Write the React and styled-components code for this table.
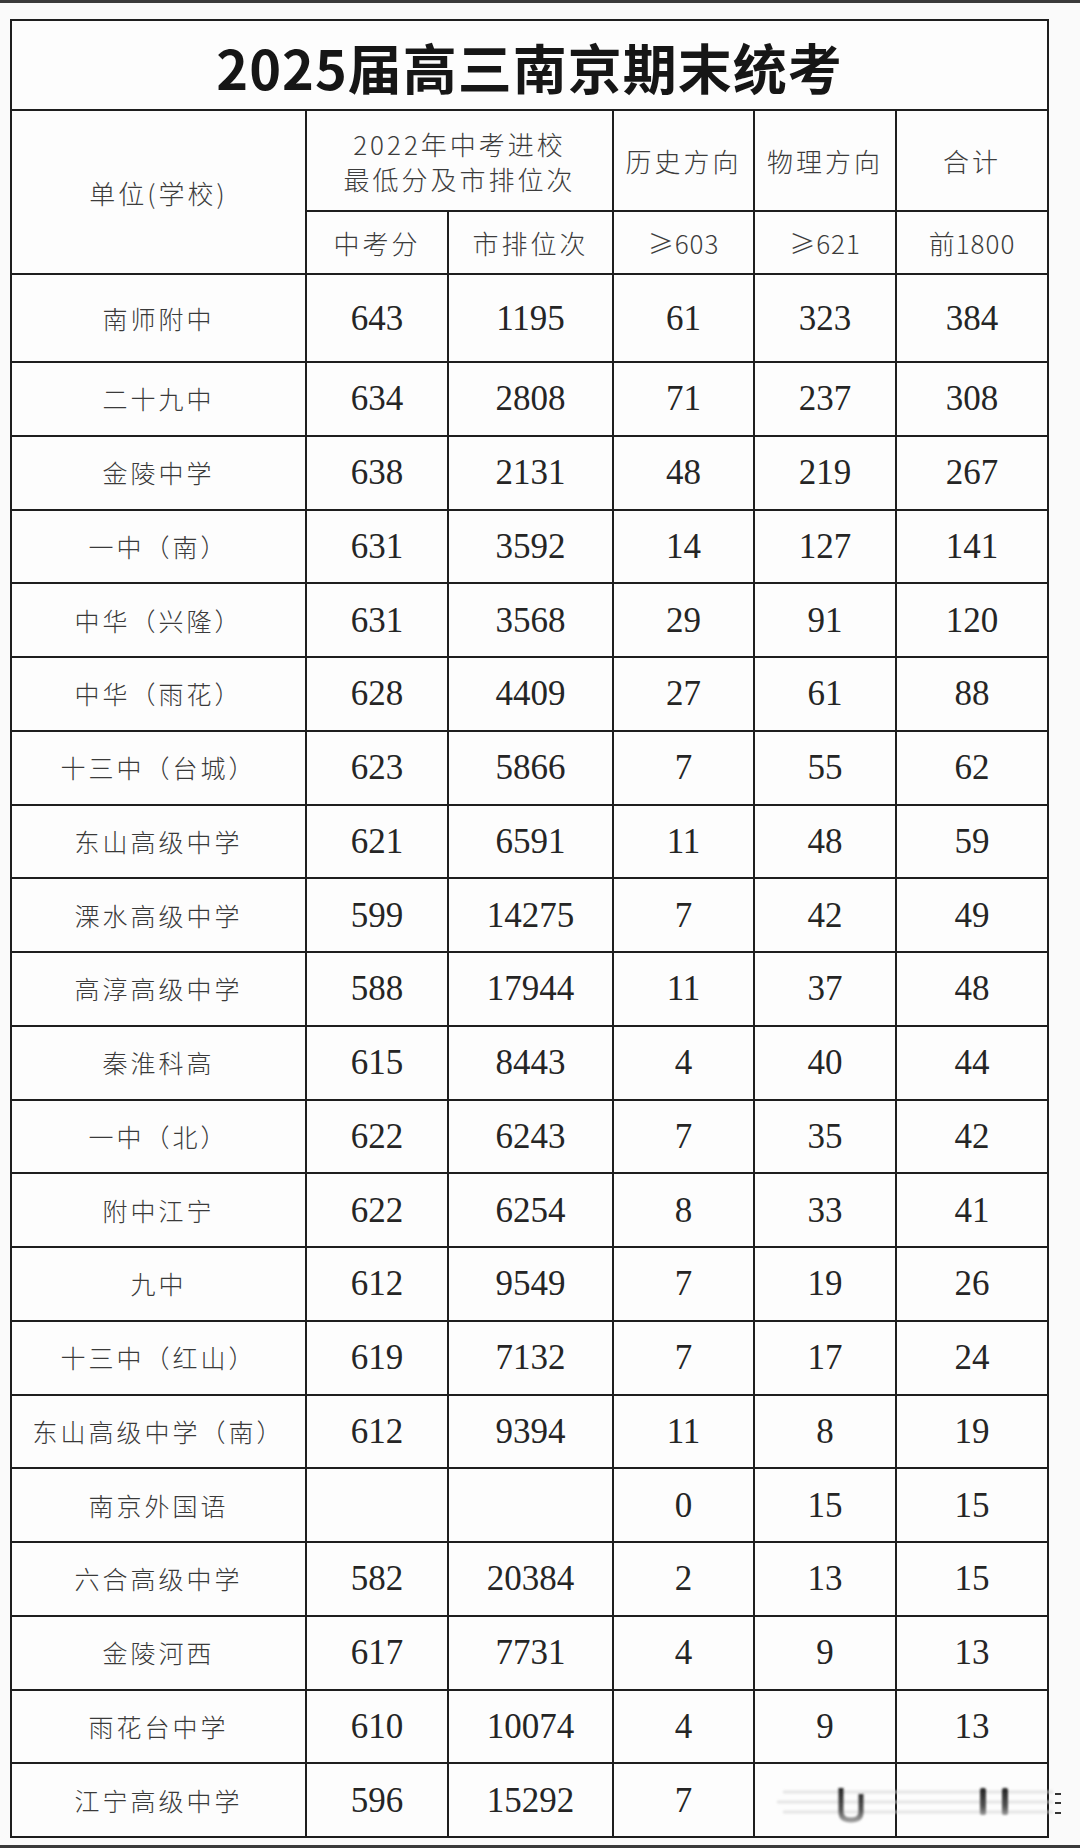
import React from 'react';
import styled, { createGlobalStyle } from 'styled-components';

const GlobalStyle = createGlobalStyle`
  html, body {
    margin: 0;
    padding: 0;
    background: #f9f9f9;
  }
  body {
    font-family: "Noto Sans CJK SC", "Noto Sans", sans-serif;
  }
`;

const Page = styled.div`
  width: 1080px;
  height: 1848px;
  box-sizing: border-box;
  border-top: 3px solid #3a3a3a;
  border-bottom: 3px solid #3a3a3a;
  padding: 16px 0 0 10px;
  background: #fafafa;
  overflow: hidden;
`;

const Frame = styled.div`
  position: relative;
  width: 1037px;
`;

const Table = styled.table`
  width: 1037px;
  table-layout: fixed;
  border-collapse: collapse;
  border: 2px solid #1e1e1e;
  background: #fdfdfd;
`;

const Cell = styled.td`
  border: 2px solid #1e1e1e;
  padding: 0;
  text-align: center;
  vertical-align: middle;
  color: #444;
`;

const TitleCell = styled(Cell)`
  height: 84px;
  padding-top: 4px;
  font-size: 54px;
  font-weight: 700;
  color: #161616;
  letter-spacing: 1px;
  line-height: 1;
`;

const HeadCell = styled(Cell)`
  height: ${p => p.$h}px;
  font-size: 26px;
  font-weight: 300;
  letter-spacing: ${p => (p.$tight ? 1 : 3)}px;
  line-height: 35px;
  color: #3c3c3c;
`;

const NameCell = styled(Cell)`
  height: ${p => p.$h}px;
  font-size: 25px;
  font-weight: 300;
  letter-spacing: 3px;
  color: #3a3a3a;
  line-height: 1;
`;

const NumCell = styled(Cell)`
  font-family: "Liberation Serif", "DejaVu Serif", serif;
  font-size: 35px;
  line-height: 1;
  color: #252525;
`;

const Glitch = styled.svg`
  position: absolute;
  left: 753px;
  bottom: 8px;
  width: 300px;
  height: 50px;
  pointer-events: none;
`;

const cols = [295, 142, 165, 141, 142, 152];

const rows = [
  ['南师附中', '643', '1195', '61', '323', '384'],
  ['二十九中', '634', '2808', '71', '237', '308'],
  ['金陵中学', '638', '2131', '48', '219', '267'],
  ['一中（南）', '631', '3592', '14', '127', '141'],
  ['中华（兴隆）', '631', '3568', '29', '91', '120'],
  ['中华（雨花）', '628', '4409', '27', '61', '88'],
  ['十三中（台城）', '623', '5866', '7', '55', '62'],
  ['东山高级中学', '621', '6591', '11', '48', '59'],
  ['溧水高级中学', '599', '14275', '7', '42', '49'],
  ['高淳高级中学', '588', '17944', '11', '37', '48'],
  ['秦淮科高', '615', '8443', '4', '40', '44'],
  ['一中（北）', '622', '6243', '7', '35', '42'],
  ['附中江宁', '622', '6254', '8', '33', '41'],
  ['九中', '612', '9549', '7', '19', '26'],
  ['十三中（红山）', '619', '7132', '7', '17', '24'],
  ['东山高级中学（南）', '612', '9394', '11', '8', '19'],
  ['南京外国语', '', '', '0', '15', '15'],
  ['六合高级中学', '582', '20384', '2', '13', '15'],
  ['金陵河西', '617', '7731', '4', '9', '13'],
  ['雨花台中学', '610', '10074', '4', '9', '13'],
  ['江宁高级中学', '596', '15292', '7', '', ''],
];

const App = () => {
  return (
    <Page>
      <GlobalStyle />
      <Frame>
        <Table>
          <colgroup>
            {cols.map((w, i) => (
              <col key={i} style={{ width: w }} />
            ))}
          </colgroup>
          <tbody>
            <tr>
              <TitleCell colSpan={6}>2025届高三南京期末统考</TitleCell>
            </tr>
            <tr>
              <HeadCell rowSpan={2} $h={160}>单位(学校)</HeadCell>
              <HeadCell colSpan={2} $h={99}>
                2022年中考进校
                <br />
                最低分及市排位次
              </HeadCell>
              <HeadCell $h={99}>历史方向</HeadCell>
              <HeadCell $h={99}>物理方向</HeadCell>
              <HeadCell $h={99}>合计</HeadCell>
            </tr>
            <tr>
              <HeadCell $h={61}>中考分</HeadCell>
              <HeadCell $h={61}>市排位次</HeadCell>
              <HeadCell $h={61} $tight>≥603</HeadCell>
              <HeadCell $h={61} $tight>≥621</HeadCell>
              <HeadCell $h={61} $tight>前1800</HeadCell>
            </tr>
            {rows.map((r, i) => (
              <tr key={r[0]}>
                <NameCell $h={i === 0 ? 86 : 71.75}>{r[0]}</NameCell>
                {r.slice(1).map((v, j) => (
                  <NumCell key={j}>{v}</NumCell>
                ))}
              </tr>
            ))}
          </tbody>
        </Table>
        <Glitch viewBox="0 0 300 50">
          <defs>
            <filter id="soft" x="-20%" y="-20%" width="140%" height="140%">
              <feGaussianBlur stdDeviation="0.9" />
            </filter>
            <linearGradient id="fadeV" x1="0" y1="0" x2="0" y2="1">
              <stop offset="0" stopColor="#222" />
              <stop offset="0.7" stopColor="#555" />
              <stop offset="1" stopColor="#999" />
            </linearGradient>
          </defs>
          <g stroke="#d6d6d6" strokeWidth="3" opacity="0.6" filter="url(#soft)">
            <line x1="20" y1="12" x2="290" y2="12" />
            <line x1="14" y1="22" x2="290" y2="22" />
            <line x1="20" y1="32" x2="290" y2="32" />
          </g>
          <g filter="url(#soft)">
            <path d="M78 8 V32 Q78 40 88 40 Q98 40 98 32 V14" fill="none" stroke="url(#fadeV)" strokeWidth="5" />
            <rect x="217" y="8" width="6" height="27" rx="2" fill="url(#fadeV)" />
            <rect x="239" y="8" width="6" height="27" rx="2" fill="url(#fadeV)" />
          </g>
          <g stroke="#333" strokeWidth="2">
            <line x1="292" y1="14" x2="298" y2="14" />
            <line x1="292" y1="23" x2="298" y2="23" />
            <line x1="292" y1="33" x2="298" y2="33" />
          </g>
        </Glitch>
      </Frame>
    </Page>
  );
};

export default App;
